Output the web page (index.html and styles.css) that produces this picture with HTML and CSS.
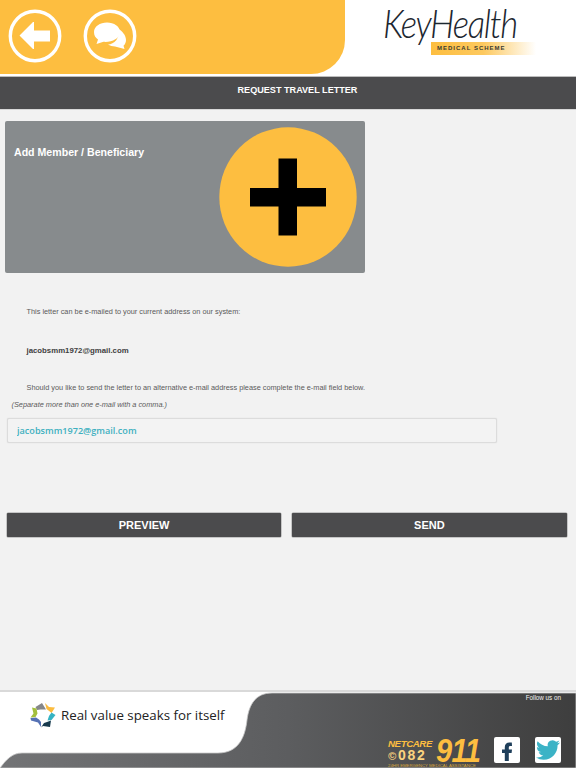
FILE: index.html
```html
<!DOCTYPE html>
<html lang="en">
<head>
<meta charset="utf-8">
<title>Request Travel Letter</title>
<link rel="stylesheet" href="styles.css">
</head>
<body>
<div class="page">
  <header class="top">
    <div class="top-yellow">
      <svg class="nav-icon" viewBox="0 0 54 54" width="54" height="54">
        <circle cx="27" cy="27" r="24.7" fill="none" stroke="#fff" stroke-width="3.4"/>
        <path d="M11.5 26.5 L25 13 L26 13 V21.5 H42 V32.5 H26 V40 L25 40 Z" fill="#fff"/>
      </svg>
      <svg class="nav-icon" viewBox="0 0 54 54" width="54" height="54">
        <circle cx="27" cy="27" r="24.7" fill="none" stroke="#fff" stroke-width="3.4"/>
        <path d="M35.5 20 C39 22 43 26 43 31 C43 33.5 42 35.5 40.500 36.800 L41.500 40 L32 37.500 C29.500 37.500 27 36.800 25 35.500 C31 35.500 37.500 29 35.500 20 Z" fill="#fff"/>
        <path d="M24 13.500 C17 13.500 11 17.500 11 23 C11 26.500 12.500 28.800 15 30.500 L13.500 35 L20.500 32.800 C28 33.500 37 30 37 23 C37 17.500 31 13.500 24 13.500 Z" fill="#fff"/>
      </svg>
    </div>
    <div class="logo">
      <span class="logo-strip">MEDICAL SCHEME</span>
      <span class="logo-word">KeyHealth</span>
    </div>
  </header>
  <h1 class="title-bar">REQUEST TRAVEL LETTER</h1>
  <main class="content">
    <section class="add-card">
      <h2 class="add-label">Add Member / Beneficiary</h2>
      <svg class="add-icon" viewBox="0 0 138 140" width="138" height="140">
        <ellipse cx="69" cy="70" rx="68.700" ry="69.700" fill="#fdbe40"/>
        <path d="M59.500 31.500 H78 V61 H107 V79.500 H78 V108.500 H59.500 V79.500 H31 V61 H59.500 Z" fill="#000"/>
      </svg>
    </section>
    <p class="note note-first">This letter can be e-mailed to your current address on our system:</p>
    <p class="note note-email">jacobsmm1972@gmail.com</p>
    <p class="note note-alt">Should you like to send the letter to an alternative e-mail address please complete the e-mail field below.</p>
    <p class="note-hint">(Separate more than one e-mail with a comma.)</p>
    <input class="email-input" type="text" value="jacobsmm1972@gmail.com">
    <div class="actions">
      <button class="action" type="button">PREVIEW</button>
      <button class="action" type="button">SEND</button>
    </div>
  </main>
  <footer class="footer">
    <svg class="footer-shape" viewBox="0 0 576 76" width="576" height="76" preserveAspectRatio="none">
      <defs>
        <linearGradient id="fg" x1="0" y1="0" x2="1" y2="0">
          <stop offset="0" stop-color="#737476"/>
          <stop offset="0.5" stop-color="#5c5d5f"/>
          <stop offset="1" stop-color="#3e3e3e"/>
        </linearGradient>
      </defs>
      <path d="M576 1 H272 C256 1 249 12 247 28 C245 46 238 61 218 61 H22 C12 61 6 68 0 76 H576 Z" fill="url(#fg)" stroke="#c9c9c9" stroke-width="0.800"/>
    </svg>
    <div class="tagline">
      <svg class="star" viewBox="0 0 26 26" width="26" height="26">
        <path d="M12 1 L16 7.500 L10.500 7.500 L7 8 L5.500 5 Z" fill="#85878a"/>
        <path d="M15 1 L19 5 L25 5.500 L21.500 11 L18.500 8.500 L16.500 7 Z" fill="#fcbc3e"/>
        <path d="M21.500 10.500 L25.500 13 L21.500 18 L17.500 18.500 L19 14 Z" fill="#35b3c3"/>
        <path d="M21 18.500 L20 25 L13 24 L11 25.500 L14 21 L17 20 Z" fill="#173a4d"/>
        <path d="M11 25 L8 20.500 L1 18.500 L0.500 16 L6 15.500 L9 17.500 L11 20 Z" fill="#5571b4"/>
        <path d="M0.500 15.500 L3.500 11.500 L2 5.500 L6.500 6.500 L7.500 11.500 L5.500 15 Z" fill="#a3bf3c"/>
      </svg>
      <span class="tagline-text">Real value speaks for itself</span>
    </div>
    <div class="footer-right">
      <span class="follow">Follow us on</span>
      <div class="brands">
        <div class="netcare">
          <div class="netcare-main">
            <div class="netcare-left">
              <span class="netcare-name">NETCARE</span>
              <span class="netcare-num"><span class="netcare-c">©</span>082</span>
            </div>
            <span class="netcare-911">911</span>
          </div>
          <span class="netcare-sub">24HR EMERGENCY MEDICAL ASSISTANCE</span>
        </div>
        <div class="social">
          <svg viewBox="0 0 26 26" width="26" height="26"><path d="M17.800 5.500 H15.500 C12.500 5.500 10.800 7.300 10.800 10 V12.500 H8 V16 H10.800 V24 H14.800 V16 H17.600 L18 12.500 H14.800 V10.500 C14.800 9.500 15.300 9 16.300 9 H18 Z" fill="#1f3f5b"/></svg>
        </div>
        <div class="social">
          <svg viewBox="-1 -1 26 26" width="26" height="26"><path d="M23.953 4.570a10 10 0 01-2.825.775 4.958 4.958 0 002.163-2.723c-.951.555-2.005.959-3.127 1.184a4.920 4.920 0 00-8.384 4.482C7.690 8.095 4.067 6.130 1.640 3.162a4.822 4.822 0 00-.666 2.475c0 1.710.870 3.213 2.188 4.096a4.904 4.904 0 01-2.228-.616v.060a4.923 4.923 0 003.946 4.827 4.996 4.996 0 01-2.212.085 4.936 4.936 0 004.604 3.417 9.867 9.867 0 01-6.102 2.105c-.390 0-.779-.023-1.170-.067a13.995 13.995 0 007.557 2.209c9.053 0 13.998-7.496 13.998-13.985 0-.210 0-.420-.015-.630A9.935 9.935 0 0024 4.590z" fill="#3bb3c6"/></svg>
        </div>
      </div>
    </div>
  </footer>
</div>
</body>
</html>
```
FILE: styles.css
```css
* { box-sizing: border-box; }
html, body { margin: 0; padding: 0; }
body {
  background: #f2f2f2;
  font-family: "Liberation Sans", Arial, sans-serif;
  color: #4a4a4a;
}
.page {
  width: 576px;
  height: 768px;
  display: flex;
  flex-direction: column;
  overflow: hidden;
}
.top {
  height: 76px;
  background: #fff;
  display: flex;
  flex: none;
}
.top-yellow {
  width: 345px;
  height: 74px;
  background: #fdbe40;
  border-bottom-right-radius: 34px;
  display: flex;
  gap: 21px;
  padding: 9px 0 0 8px;
}
.nav-icon { display: block; }
.logo {
  flex: 1;
  position: relative;
}
.logo-word {
  position: absolute;
  left: 38px;
  top: 4px;
  font-family: "Lato", sans-serif;
  font-weight: 300;
  font-style: italic;
  font-size: 40px;
  line-height: 38px;
  letter-spacing: -1.500px;
  color: #1c2730;
  white-space: nowrap;
  transform: scaleX(.87);
  transform-origin: left center;
}
.logo-strip {
  position: absolute;
  left: 86px;
  top: 42px;
  width: 105px;
  height: 13px;
  padding-left: 6px;
  background: linear-gradient(90deg, #fdbe40 0%, #fdc95f 50%, #fff 100%);
  font-size: 6px;
  line-height: 13px;
  font-weight: bold;
  letter-spacing: 1px;
  color: #3a3a30;
  white-space: nowrap;
}
.title-bar {
  margin: 0;
  flex: none;
  height: 34px;
  padding-left: 19px;
  border-top: 1px solid #bdbdbd;
  border-bottom: 1px solid #d8d8d8;
  background: #4b4b4d;
  color: #fff;
  font-size: 9.100px;
  line-height: 27px;
  font-weight: bold;
  text-align: center;
}
.content {
  flex: 1;
  min-height: 0;
  padding: 11px 9.500px 0 5px;
}
.add-card {
  width: 360px;
  height: 152px;
  background: #878b8d;
  border-radius: 2px;
  display: flex;
  justify-content: space-between;
  padding: 6px 8.500px 0 9px;
}
.add-label {
  margin: 19px 0 0;
  color: #fff;
  font-size: 10.600px;
  line-height: 13px;
  font-weight: bold;
}
.add-icon { display: block; }
.note {
  margin: 0;
  padding-left: 21.500px;
  font-size: 7.330px;
  line-height: 10px;
  color: #5a5a5a;
}
.note-first { margin-top: 34px; }
.note-email { margin-top: 29px; font-size: 7.800px; font-weight: bold; color: #404040; }
.note-alt { margin-top: 27px; }
.note-hint {
  margin: 7px 0 0;
  padding-left: 6.500px;
  font-size: 7.350px;
  line-height: 10px;
  font-style: italic;
  color: #5a5a5a;
}
.email-input {
  display: block;
  width: 490px;
  height: 25px;
  margin: 8px 0 0 2px;
  padding: 0 9px;
  background: #f3f3f3;
  border: 1px solid #dcdcdc;
  border-radius: 2px;
  box-shadow: 0 0 1px #ccc;
  font-family: "Open Sans", sans-serif;
  font-size: 9.100px;
  font-weight: 600;
  color: #3eb0c0;
}
.actions {
  display: flex;
  gap: 11px;
  margin: 70px 0 0 2px;
}
.action {
  flex: 1;
  height: 24px;
  padding: 0;
  background: #4b4b4d;
  border: 0;
  border-radius: 1px;
  box-shadow: 0 0 0 .5px #999;
  color: #fff;
  font-family: "Liberation Sans", Arial, sans-serif;
  font-size: 11px;
  font-weight: bold;
}
.footer {
  position: relative;
  flex: none;
  height: 78px;
  background: #fff;
  border-top: 2px solid #d9d9d9;
  display: flex;
  justify-content: space-between;
}
.footer-shape {
  position: absolute;
  left: 0;
  top: 0;
}
.tagline {
  position: relative;
  display: flex;
  align-items: center;
  gap: 5px;
  height: 46px;
  padding-left: 30px;
}
.star { display: block; }
.tagline-text {
  font-family: "Open Sans", sans-serif;
  font-size: 13.300px;
  color: #222;
}
.footer-right {
  position: relative;
  width: 190px;
  padding-right: 15px;
  display: flex;
  flex-direction: column;
  align-items: flex-end;
}
.follow {
  color: #f2f2f2;
  font-size: 6.300px;
  line-height: 8px;
  margin-top: 2px;
}
.brands {
  display: flex;
  align-items: flex-start;
  margin-top: 35px;
}
.netcare {
  width: 106px;
  color: #fdbe40;
}
.netcare-main { display: flex; height: 25px; margin-top: 1px; }
.netcare-left {
  display: flex;
  flex-direction: column;
  font-style: italic;
  font-weight: bold;
  width: 48px;
}
.netcare-name { font-size: 9.700px; line-height: 11px; letter-spacing: -.400px; white-space: nowrap; }
.netcare-num { font-size: 14px; line-height: 13px; font-style: normal; letter-spacing: 1.800px; color: #fbd37f; white-space: nowrap; }
.netcare-c { font-size: 11px; font-style: italic; }
.netcare-911 {
  font-size: 33px;
  line-height: 25px;
  font-weight: bold;
  font-style: italic;
  letter-spacing: -.800px;
  transform: scaleX(.88);
  transform-origin: left center;
}
.netcare-sub {
  display: block;
  font-size: 4.300px;
  line-height: 5px;
  white-space: nowrap;
  color: #d8a93f;
}
.social {
  width: 26px;
  height: 26px;
  background: #fff;
  border-radius: 2px;
}
.social + .social { margin-left: 15px; }
.social svg { display: block; }
```
